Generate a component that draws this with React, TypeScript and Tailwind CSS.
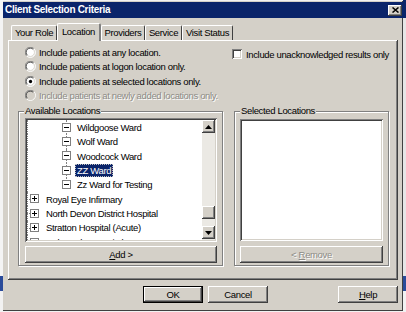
import React from "react";

const raised =
  "shadow-[inset_-1px_-1px_#404040,inset_1px_1px_#ffffff,inset_-2px_-2px_#808080,inset_2px_2px_#d4d0c8]";
const sunken =
  "shadow-[inset_1px_1px_#808080,inset_-1px_-1px_#ffffff,inset_2px_2px_#404040,inset_-2px_-2px_#d4d0c8]";

function Radio({ checked, disabled }: { checked?: boolean; disabled?: boolean }) {
  return (
    <svg width="11" height="11" viewBox="0 0 12 12" className="shrink-0">
      <circle cx="6" cy="6" r="5" fill={disabled ? "#d4d0c8" : "#ffffff"} />
      <path d="M1.8 9.8 A5.5 5.5 0 0 1 9.8 1.8" fill="none" stroke="#808080" strokeWidth="1" />
      <path d="M9.8 1.8 A5.5 5.5 0 0 1 1.8 9.8" fill="none" stroke="#ffffff" strokeWidth="1" />
      <path d="M2.6 9 A4.5 4.5 0 0 1 9 2.6" fill="none" stroke="#404040" strokeWidth="1" />
      <path d="M9 2.6 A4.5 4.5 0 0 1 2.6 9" fill="none" stroke="#d4d0c8" strokeWidth="1" />
      {checked && <circle cx="6" cy="6" r="1.8" fill="#000000" />}
    </svg>
  );
}

function TreeBox({ plus }: { plus?: boolean }) {
  return (
    <svg width="9" height="9" viewBox="0 0 9 9" className="absolute top-[2.5px]">
      <rect x="0.5" y="0.5" width="8" height="8" fill="#ffffff" stroke="#808080" />
      <path d="M2 4.5 H7" stroke="#000000" />
      {plus && <path d="M4.5 2 V7" stroke="#000000" />}
    </svg>
  );
}

function Btn({
  children,
  w,
  disabled,
  def,
}: {
  children: React.ReactNode;
  w: string;
  disabled?: boolean;
  def?: boolean;
}) {
  return (
    <div
      className={`${w} h-[17px] flex items-center justify-center bg-[#d4d0c8] ${
        def ? "border border-black" : ""
      } ${raised} ${disabled ? "text-[#8d8b86] [text-shadow:1px_1px_0_#ffffff]" : "text-black"}`}
    >
      {children}
    </div>
  );
}

const children = ["Wildgoose Ward", "Wolf Ward", "Woodcock Ward", "ZZ Ward", "Zz Ward for Testing"];
const roots = [
  "Royal Eye Infirmary",
  "North Devon District Hospital",
  "Stratton Hospital (Acute)",
  "Holsworthy Hospital",
];

export default function App() {
  return (
    <div className="w-[406px] h-[312px] bg-[#f2f2f2] flex overflow-hidden font-['Liberation_Sans',Arial,sans-serif] text-[9.5px] tracking-[-0.35px] text-black leading-none">
      {/* desktop strip left */}
      <div className="w-[3px] flex flex-col">
        <div className="h-[276px] bg-[#f4f4f4]" />
        <div className="h-[15px] bg-[#2a4b9a]" />
      </div>

      {/* Dialog */}
      <div className="w-[400px] h-[310px] mt-[1px] bg-[#d4d0c8] flex flex-col shadow-[inset_-1px_-1px_#404040]">
        {/* Title bar */}
        <div className="mt-[1px] h-[16px] bg-[#0a246a] flex items-center justify-between pl-[2px] pr-[1px]">
          <span className="text-white font-bold text-[10px] tracking-[-0.3px]">Client Selection Criteria</span>
          <div className={`w-[14px] h-[11px] bg-[#d4d0c8] flex items-center justify-center ${raised}`}>
            <svg width="7" height="6" viewBox="0 0 7 6">
              <path d="M0.5 0.5 L6.5 5.5 M6.5 0.5 L0.5 5.5" stroke="#000000" strokeWidth="1.5" />
            </svg>
          </div>
        </div>

        {/* Tabs */}
        <div className="mt-[5px] h-[17px] flex items-end pl-[8px]">
          {[
            { t: "Your Role", w: "w-[46px]" },
            { t: "Location", w: "w-[44px]", sel: true },
            { t: "Providers", w: "w-[44px]" },
            { t: "Service", w: "w-[37px]" },
            { t: "Visit Status", w: "w-[51px]" },
          ].map((tab) =>
            tab.sel ? (
              <div
                key={tab.t}
                className={`${tab.w} h-[18px] -mb-[1px] relative z-10 bg-[#d4d0c8] rounded-t-[2px] border-t border-l border-white border-r-2 border-r-[#808080] flex items-center justify-center pb-[2px]`}
              >
                {tab.t}
              </div>
            ) : (
              <div
                key={tab.t}
                className={`${tab.w} h-[15px] bg-[#d4d0c8] rounded-t-[2px] border-t border-l border-white border-r border-r-[#404040] flex items-center justify-center`}
              >
                {tab.t}
              </div>
            )
          )}
        </div>

        {/* Tab panel */}
        <div className={`ml-[5px] w-[390px] h-[240px] bg-[#d4d0c8] ${raised}`}>
          <div className="flex pt-[5px]">
            <div className="pl-[17px] w-[224px] flex flex-col">
              {[
                { t: "Include patients at any location." },
                { t: "Include patients at logon location only." },
                { t: "Include patients at selected locations only.", checked: true },
                { t: "Include patients at newly added locations only.", disabled: true },
              ].map((r) => (
                <div key={r.t} className="h-[14.5px] flex items-center gap-[3px] whitespace-nowrap">
                  <Radio checked={r.checked} disabled={r.disabled} />
                  <span className={r.disabled ? "text-[#8d8b86] [text-shadow:1px_1px_0_#ffffff]" : ""}>
                    {r.t}
                  </span>
                </div>
              ))}
            </div>
            <div className="pt-[4px] flex items-start gap-[4px] whitespace-nowrap">
              <div className={`w-[10px] h-[10px] bg-white ${sunken}`} />
              <span className="mt-[1px]">Include unacknowledged results only</span>
            </div>
          </div>

          {/* Group boxes */}
          <div className="flex pl-[10px] gap-[11px] mt-[8px]">
            {/* Available */}
            <div className="relative w-[205px] h-[155px] border border-[#808080] shadow-[1px_1px_0_#ffffff,inset_1px_1px_0_#ffffff]">
              <span className="absolute -top-[6px] left-[5px] bg-[#d4d0c8] px-[1px]">Available Locations</span>
              <div className={`ml-[6px] mt-[6px] w-[192px] h-[124px] bg-white p-[2px] flex ${sunken}`}>
                <div className="flex-1 overflow-hidden">
                  {children.map((c, i) => (
                    <div key={c} className="relative h-[14.4px]">
                      <span className="absolute left-0 top-0 h-full border-l border-dotted border-[#808080]" />
                      <span
                        className={`absolute left-[39px] top-0 border-l border-dotted border-[#808080] ${
                          i === children.length - 1 ? "h-1/2" : "h-full"
                        }`}
                      />
                      <span className="absolute left-[35px] top-0 w-[9px] h-full">
                        <TreeBox />
                      </span>
                      <span
                        className={`absolute top-[1px] h-[13px] flex items-center whitespace-nowrap ${
                          c === "ZZ Ward"
                            ? "left-[48px] px-[2px] bg-[#0a246a] text-white outline outline-1 outline-dotted outline-[#c0c0c0] -outline-offset-1"
                            : "left-[50px]"
                        }`}
                      >
                        {c}
                      </span>
                    </div>
                  ))}
                  {roots.map((r) => (
                    <div key={r} className="relative h-[14.4px]">
                      <span className="absolute left-0 top-0 h-full border-l border-dotted border-[#808080]" />
                      <span className="absolute left-0 top-[7px] w-[3px] border-t border-dotted border-[#808080]" />
                      <span className="absolute left-[3px] top-0 w-[9px] h-full">
                        <TreeBox plus />
                      </span>
                      <span className="absolute left-[19px] top-[1px] h-[13px] flex items-center whitespace-nowrap">
                        {r}
                      </span>
                    </div>
                  ))}
                </div>
                {/* Scrollbar */}
                <div className="w-[13px] flex flex-col">
                  <div className={`h-[13px] bg-[#d4d0c8] flex items-center justify-center ${raised}`}>
                    <svg width="7" height="4" viewBox="0 0 7 4">
                      <path d="M3.5 0 L7 4 L0 4 Z" fill="#000000" />
                    </svg>
                  </div>
                  <div className="flex-1 bg-[#ebe9e4] pt-[73px]">
                    <div className={`h-[13px] bg-[#d4d0c8] ${raised}`} />
                  </div>
                  <div className={`h-[13px] bg-[#d4d0c8] flex items-center justify-center ${raised}`}>
                    <svg width="7" height="4" viewBox="0 0 7 4">
                      <path d="M0 0 L7 0 L3.5 4 Z" fill="#000000" />
                    </svg>
                  </div>
                  <div className="h-[1px] bg-[#ebe9e4]" />
                </div>
              </div>
              <div className="ml-[6px] mt-[4px]">
                <Btn w="w-[192px]">
                  <span>
                    <span className="underline">A</span>dd &gt;
                  </span>
                </Btn>
              </div>
            </div>

            {/* Selected */}
            <div className="relative w-[155px] h-[155px] border border-[#808080] shadow-[1px_1px_0_#ffffff,inset_1px_1px_0_#ffffff]">
              <span className="absolute -top-[6px] left-[5px] bg-[#d4d0c8] px-[1px]">Selected Locations</span>
              <div className={`ml-[5px] mt-[7px] w-[143px] h-[122px] bg-white ${sunken}`} />
              <div className="ml-[5px] mt-[5px]">
                <Btn w="w-[143px]" disabled>
                  <span>
                    &lt; <span className="underline">R</span>emove
                  </span>
                </Btn>
              </div>
            </div>
          </div>
        </div>

        {/* Bottom buttons */}
        <div className="mt-[6px] flex pl-[140px]">
          <Btn w="w-[60px]" def>
            OK
          </Btn>
          <div className="ml-[5px]">
            <Btn w="w-[60px]">Cancel</Btn>
          </div>
          <div className="ml-[70px]">
            <Btn w="w-[60px]">
              <span>
                <span className="underline">H</span>elp
              </span>
            </Btn>
          </div>
        </div>
      </div>

      {/* desktop strip right */}
      <div className="w-[3px] flex flex-col">
        <div className="h-[18px] bg-[#0a246a]" />
        <div className="h-[258px] bg-[#e6e6e6]" />
        <div className="h-[15px] bg-[#2a4b9a]" />
      </div>
    </div>
  );
}
